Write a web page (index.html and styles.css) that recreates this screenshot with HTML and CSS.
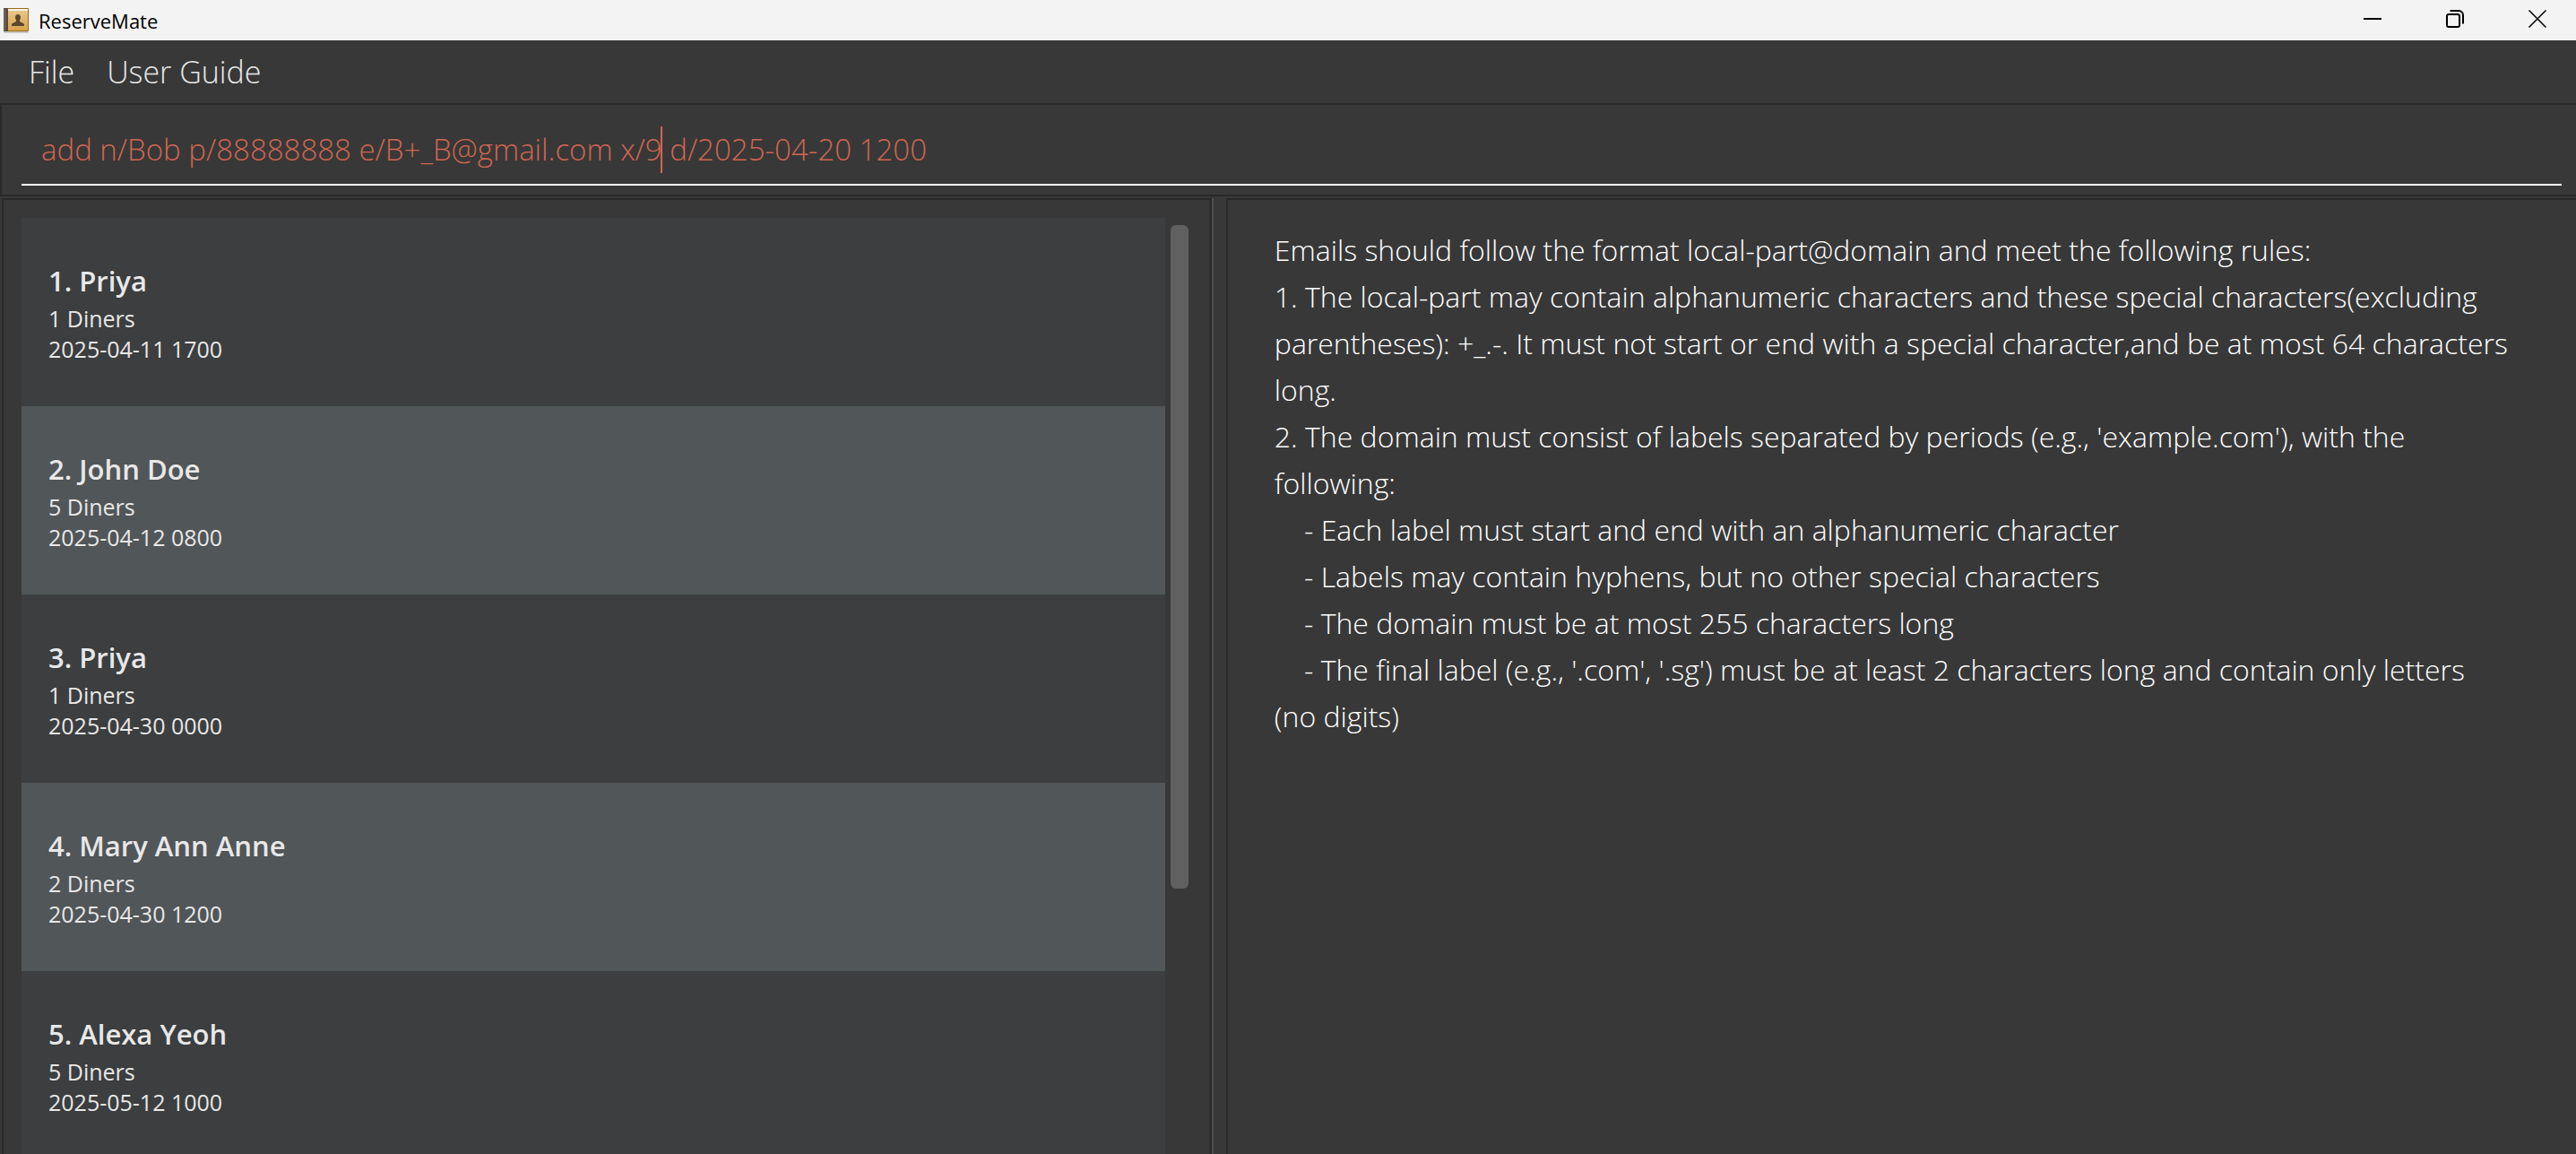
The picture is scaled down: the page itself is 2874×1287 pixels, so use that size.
FILE: index.html
```html
<!DOCTYPE html>
<html lang="en">
<head>
<meta charset="utf-8">
<title>ReserveMate</title>
<link rel="stylesheet" href="styles.css">
</head>
<body>
<div class="window">
  <header class="titlebar">
    <svg class="app-icon" viewBox="0 0 32 32" aria-hidden="true">
      <defs>
        <linearGradient id="cover" x1="0" y1="0" x2="0" y2="1">
          <stop offset="0" stop-color="#e6c48a"/>
          <stop offset="1" stop-color="#d9a548"/>
        </linearGradient>
      </defs>
      <rect x="1" y="28" width="28" height="2" rx="1" fill="#c9c7c4"/>
      <rect x="1" y="2" width="28" height="26" rx="1" fill="#9a6a1c"/>
      <rect x="6" y="3" width="22" height="2" fill="#fbf3e2"/>
      <rect x="5" y="5" width="23" height="22" fill="url(#cover)"/>
      <rect x="1" y="2" width="5" height="26" fill="#5d4a40"/>
      <rect x="2" y="3" width="1" height="24" fill="#85736a"/>
      <path d="M17 9c2 0 3 1.300 3 3.300 0 1.500-.5 2.400-1 3v1.500c0 1 5 1.500 5 4v1.200H10v-1.200c0-2.500 5-3 5-4v-1.500c-.5-.6-1-1.500-1-3C14 10.300 15 9 17 9z" fill="#5c4630"/>
    </svg>
    <h1 class="app-name">ReserveMate</h1>
    <div class="window-controls">
      <button type="button" aria-label="Minimize"><svg viewBox="0 0 20 20"><path d="M0 10h20" stroke-width="2"/></svg></button>
      <button type="button" aria-label="Restore"><svg viewBox="0 0 20 20"><rect x="1" y="5" width="14" height="14" rx="2" stroke-width="2"/><path d="M4.500 1H14a5 5 0 0 1 5 5v9.500" stroke-width="2"/></svg></button>
      <button type="button" aria-label="Close"><svg viewBox="0 0 20 20"><path d="M.5.5l19 19M19.500.5l-19 19" stroke-width="1.500"/></svg></button>
    </div>
  </header>

  <nav class="menubar">
    <button type="button">File</button>
    <button type="button">User Guide</button>
  </nav>

  <form class="command">
    <input class="command-input" type="text" aria-label="Command" value="add n/Bob p/88888888 e/B+_B@gmail.com x/9 d/2025-04-20 1200" spellcheck="false">
    <span class="caret"></span>
  </form>

  <main class="panes">
    <section class="pane list-pane">
      <ol class="reservations">
        <li><h2>1. Priya</h2><p>1 Diners</p><p>2025-04-11 1700</p></li>
        <li><h2>2. John Doe</h2><p>5 Diners</p><p>2025-04-12 0800</p></li>
        <li><h2>3. Priya</h2><p>1 Diners</p><p>2025-04-30 0000</p></li>
        <li><h2>4. Mary Ann Anne</h2><p>2 Diners</p><p>2025-04-30 1200</p></li>
        <li><h2>5. Alexa Yeoh</h2><p>5 Diners</p><p>2025-05-12 1000</p></li>
      </ol>
      <div class="scroll-track"><div class="scroll-thumb"></div></div>
    </section>
    <div class="divider"></div>
    <section class="pane result-pane">
      <div class="result">Emails should follow the format local-part@domain and meet the following rules:
1. The local-part may contain alphanumeric characters and these special characters(excluding
parentheses): +_.-. It must not start or end with a special character,and be at most 64 characters
long.
2. The domain must consist of labels separated by periods (e.g., 'example.com'), with the
following:
    - Each label must start and end with an alphanumeric character
    - Labels may contain hyphens, but no other special characters
    - The domain must be at most 255 characters long
    - The final label (e.g., '.com', '.sg') must be at least 2 characters long and contain only letters
(no digits)</div>
    </section>
  </main>
</div>
</body>
</html>
```
FILE: styles.css
```css
* {
  box-sizing: border-box;
}

body,
h1,
h2,
p,
ol {
  margin: 0;
  padding: 0;
}

body {
  background: #383838;
  color: #e8e8e8;
  font-family: "Open Sans", "Noto Sans", sans-serif;
}

button {
  border: 0;
  padding: 0;
  background: none;
  color: inherit;
  font: inherit;
}

.window {
  display: flex;
  flex-direction: column;
  height: 100vh;
  overflow: hidden;
}

.titlebar {
  display: flex;
  flex: none;
  align-items: center;
  height: 45px;
  padding-left: 3px;
  background: #f3f3f3;
  color: #000;
}

.app-icon {
  width: 32px;
  height: 32px;
}

.app-name {
  margin-left: 8px;
  font-size: 22px;
  font-weight: 400;
  line-height: 32px;
}

.window-controls {
  display: flex;
  align-self: flex-start;
  gap: 6px;
  margin-left: auto;
}

.window-controls button {
  display: flex;
  align-items: center;
  justify-content: center;
  width: 86px;
  height: 42px;
}

.window-controls svg {
  width: 20px;
  height: 20px;
  fill: none;
  stroke: #000;
}

.menubar {
  display: flex;
  flex: none;
  gap: 36px;
  height: 70px;
  padding-left: 32px;
  font-size: 34px;
  font-weight: 300;
}

.command {
  position: relative;
  flex: none;
  height: 104px;
  padding: 20px 16px 0 22px;
  border: 2px solid #292929;
  border-right: 0;
}

.command-input {
  display: block;
  width: 100%;
  height: 70px;
  padding: 0 22px 10px;
  border: 0;
  border-bottom: 2px solid #fff;
  outline: 0;
  background: none;
  color: #d06651;
  font: inherit;
  font-size: 33px;
  font-weight: 300;
}

.caret {
  position: absolute;
  top: 24px;
  left: 735px;
  width: 2px;
  height: 52px;
  background: #d06651;
}

.panes {
  display: flex;
  flex: 1;
  min-height: 0;
  padding: 2px 0 0 2px;
}

.pane {
  border: 2px solid #292929;
  border-bottom: 0;
}

.list-pane {
  display: flex;
  flex: none;
  gap: 6px;
  width: 47%;
  padding: 20px 24px 0 20px;
  overflow: hidden;
}

.reservations {
  flex: 1;
  list-style: none;
}

.reservations li {
  height: 210px;
  padding: 49px 30px 0;
  background: #3c3e3f;
}

.reservations li:nth-child(even) {
  background: #515658;
}

.reservations h2 {
  margin-bottom: 4px;
  font-size: 31px;
  font-weight: 600;
  line-height: 42px;
}

.reservations p {
  font-size: 25px;
  line-height: 34px;
}

.scroll-track {
  width: 20px;
  padding-top: 8px;
}

.scroll-thumb {
  height: calc(100% * 5 / 7);
  border-radius: 6px;
  background: #606060;
}

.divider {
  flex: none;
  width: 16px;
  border-left: 2px solid #4f4f4f;
}

.result-pane {
  flex: 1;
  min-width: 0;
  padding: 30px 0 0 52px;
  border-right: 0;
}

.result {
  color: #fff;
  font-size: 32px;
  font-weight: 300;
  line-height: 52px;
  white-space: pre;
}
```
